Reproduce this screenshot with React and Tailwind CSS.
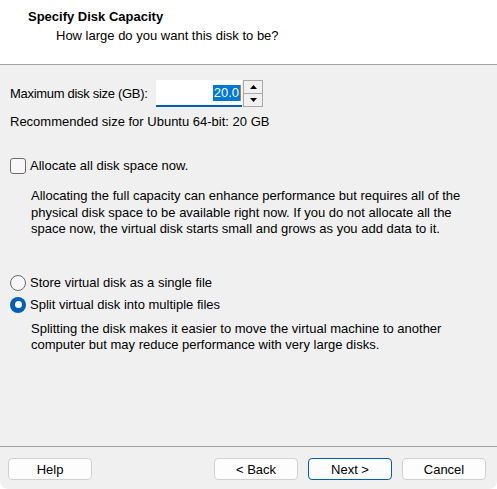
import { useState } from 'react';

const font = { fontFamily: '"Liberation Sans", Arial, sans-serif' };

function Radio({ checked, label, onClick }) {
  return (
    <label className="flex items-center gap-[4px] h-[18px] cursor-default" onClick={onClick}>
      {checked ? (
        <span className="w-[16px] h-[16px] rounded-full bg-[#005fb8] flex items-center justify-center">
          <span className="w-[7px] h-[7px] rounded-full bg-white" />
        </span>
      ) : (
        <span className="w-[16px] h-[16px] rounded-full border border-[#6b6b6b] bg-[#f7f7f7]" />
      )}
      <span>{label}</span>
    </label>
  );
}

function Button({ children, primary }) {
  return (
    <button
      className={
        'w-[84px] h-[22px] rounded-[4px] bg-[#fdfdfd] text-[13px] text-black leading-none border ' +
        (primary ? 'border-[#005fb8]' : 'border-[#d0d0d0]')
      }
    >
      {children}
    </button>
  );
}

export default function App() {
  const [allocate, setAllocate] = useState(false);
  const [split, setSplit] = useState(true);

  return (
    <div className="w-[497px] h-[489px] bg-[#f0f0f0] text-[13px] text-black flex flex-col rounded-b-[8px] overflow-hidden" style={font}>
      {/* header */}
      <div className="h-[65px] bg-white border-b border-[#a0a0a0] pt-[9px]">
        <div className="pl-[28px] font-bold leading-[16px]">Specify Disk Capacity</div>
        <div className="pl-[56px] mt-[3px] leading-[16px]">How large do you want this disk to be?</div>
      </div>

      {/* body */}
      <div className="flex-1 px-[10px]">
        <div className="flex items-center mt-[15px] h-[27px]">
          <span className="w-[146px] shrink-0 whitespace-nowrap tracking-[-0.3px]">Maximum disk size (GB):</span>
          <div className="w-[86px] h-[27px] bg-white border-b-2 border-[#005fb8] flex items-center justify-end pr-[1px]">
            <span className="bg-[#0078d7] text-white px-[1px] leading-[16px]">20.0</span>
            <span className="w-[1px] h-[16px] bg-[#e07020]" />
          </div>
          <div className="w-[20px] h-[27px] ml-[1px] border border-[#a8a8a8] flex flex-col bg-[#f0f0f0]">
            <div className="flex-1 flex items-center justify-center border-b border-[#a8a8a8]">
              <svg width="7" height="4" viewBox="0 0 7 4"><path d="M3.5 0L7 4H0z" fill="#000" /></svg>
            </div>
            <div className="flex-1 flex items-center justify-center">
              <svg width="7" height="4" viewBox="0 0 7 4"><path d="M0 0H7L3.5 4z" fill="#000" /></svg>
            </div>
          </div>
        </div>
        <div className="mt-[7px] leading-[16px]">Recommended size for Ubuntu 64-bit: 20 GB</div>

        <label className="flex items-center gap-[4px] mt-[27px] h-[18px] cursor-default" onClick={() => setAllocate(!allocate)}>
          <span className="w-[16px] h-[16px] rounded-[3px] border border-[#6b6b6b] bg-[#f7f7f7]" />
          <span>Allocate all disk space now.</span>
        </label>
        <p className="pl-[21px] mt-[13px] leading-[16.5px]">
          Allocating the full capacity can enhance performance but requires all of the
          <br />
          physical disk space to be available right now. If you do not allocate all the
          <br />
          space now, the virtual disk starts small and grows as you add data to it.
        </p>

        <div className="mt-[36px] flex flex-col gap-[4px]">
          <Radio checked={!split} label="Store virtual disk as a single file" onClick={() => setSplit(false)} />
          <Radio checked={split} label="Split virtual disk into multiple files" onClick={() => setSplit(true)} />
        </div>
        <p className="pl-[21px] mt-[7px] leading-[16.5px]">
          Splitting the disk makes it easier to move the virtual machine to another
          <br />
          computer but may reduce performance with very large disks.
        </p>
      </div>

      {/* footer */}
      <div className="border-t border-[#a0a0a0] h-[43px] flex items-start pt-[11px] pl-[8px] pr-[11px]">
        <Button>Help</Button>
        <div className="flex-1" />
        <div className="flex gap-[10px]">
          <Button>&lt; Back</Button>
          <Button primary>Next &gt;</Button>
          <Button>Cancel</Button>
        </div>
      </div>
    </div>
  );
}
